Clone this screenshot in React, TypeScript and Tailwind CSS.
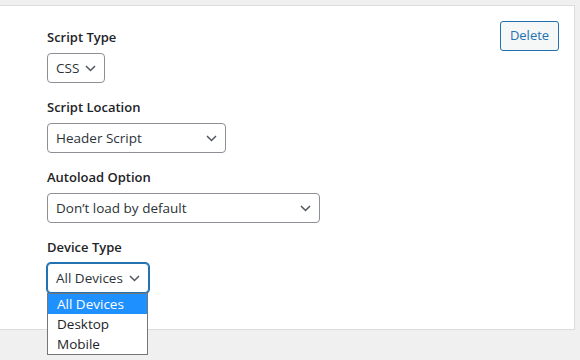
import React from "react";

const font = { fontFamily: '"Open Sans", "Noto Sans", sans-serif' };

function Chevron() {
  return (
    <svg width="11" height="7" viewBox="0 0 11 7" className="shrink-0">
      <path d="M1 1l4.5 4.5L10 1" fill="none" stroke="#50575e" strokeWidth="1.5" />
    </svg>
  );
}

function Field({ label, value, width, focused, children }: { label: string; value: string; width: string; focused?: boolean; children?: React.ReactNode }) {
  return (
    <div className="mb-[15px]">
      <div className="text-[13px] leading-[18px] font-semibold text-[#1d2327] mb-[7px]">{label}</div>
      <div className="relative">
        <div
          className={`${width} h-[30px] flex items-center justify-between pl-[8px] pr-[8px] rounded-[4px] border bg-white text-[13.5px] text-[#2c3338] ${
            focused ? "border-[#2271b1] shadow-[0_0_0_1px_#2271b1]" : "border-[#8c8f94]"
          }`}
        >
          <span className="whitespace-nowrap">{value}</span>
          <Chevron />
        </div>
        {children}
      </div>
    </div>
  );
}

export default function App() {
  const options = ["All Devices", "Desktop", "Mobile"];
  return (
    <div className="w-[580px] h-[360px] bg-[#f0f0f1] overflow-hidden pt-[5px]" style={font}>
      <div className="w-[575px] h-[325px] bg-white border-t border-r border-b border-[#dcdcde] flex justify-between items-start">
        <div className="pl-[47px] pt-[22px]">
          <Field label="Script Type" value="CSS" width="w-[58px]" />
          <Field label="Script Location" value="Header Script" width="w-[179px]" />
          <Field label="Autoload Option" value="Don’t load by default" width="w-[273px]" />
          <Field label="Device Type" value="All Devices" width="w-[102px]" focused>
            <div className="absolute left-0 top-[30px] w-[101px] border border-[#767676] bg-white text-[13.5px] z-10">
              {options.map((o, i) => (
                <div
                  key={o}
                  className={`h-[20px] leading-[20px] pl-[9px] ${i === 0 ? "bg-[#1e90ff] text-white" : "text-[#1d2327]"}`}
                >
                  {o}
                </div>
              ))}
            </div>
          </Field>
        </div>
        <button className="mt-[15px] mr-[15px] w-[59px] h-[30px] rounded-[3px] border border-[#2271b1] bg-[#f6f7f7] text-[13px] text-[#2271b1]">
          Delete
        </button>
      </div>
    </div>
  );
}
